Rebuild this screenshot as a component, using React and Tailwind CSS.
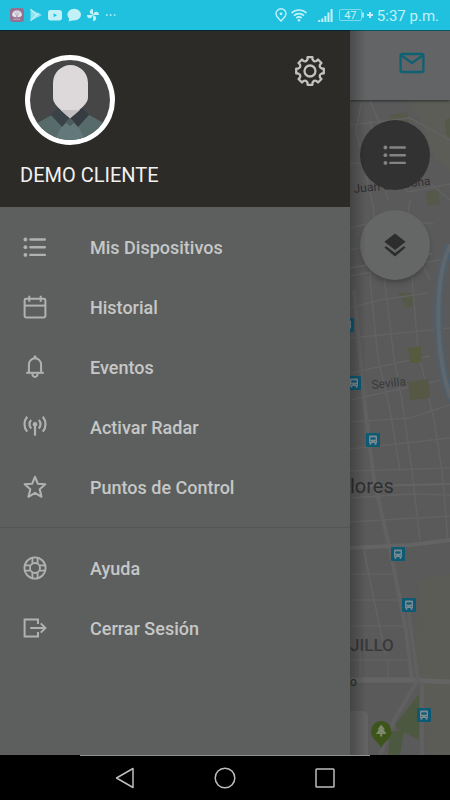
import React from "react";

const GEAR_TEETH = 8;

function polar(radius, degrees) {
  const a = (degrees * Math.PI) / 180;
  return `${(16 + radius * Math.cos(a)).toFixed(2)} ${(16 + radius * Math.sin(a)).toFixed(2)}`;
}

// outline of a cog: a flat tooth and then a rounded valley, eight times
function gearPath() {
  let d = "";
  for (let i = 0; i < GEAR_TEETH; i++) {
    const c = -90 + i * 45;
    d += `${i === 0 ? "M" : "L"}${polar(12, c - 12)} L${polar(14, c - 10)} L${polar(14, c + 10)} L${polar(12, c + 12)} `;
    d += `Q${polar(9.6, c + 22.5)} ${polar(12, c + 33)} `;
  }
  return d + "Z";
}

function GearIcon() {
  return (
    <svg viewBox="0 0 32 32" className="size-8" fill="none" stroke="currentColor" strokeWidth="2.300" strokeLinejoin="round">
      <path d={gearPath()} />
      <circle cx="16" cy="16" r="5.500" />
    </svg>
  );
}

function ListIcon() {
  return (
    <svg viewBox="0 0 24 24" className="size-6" fill="none" stroke="currentColor" strokeWidth="2.400" strokeLinecap="round">
      <path d="M7.400 4.500H21.800M7.400 12.200H21.800M7.400 19.900H21.800" />
      <g fill="currentColor" stroke="none">
        <circle cx="2.400" cy="4.500" r="1.900" />
        <circle cx="2.400" cy="12.200" r="1.900" />
        <circle cx="2.400" cy="19.900" r="1.900" />
      </g>
    </svg>
  );
}

function CalendarIcon() {
  return (
    <svg viewBox="0 0 24 24" className="size-6" fill="none" stroke="currentColor" strokeWidth="2">
      <rect x="1.600" y="3.800" width="20.800" height="18.600" rx="1.400" />
      <path d="M1.600 10.600H22.400" />
      <path d="M6.300 0.800V6.800M17.700 0.800V6.800" />
    </svg>
  );
}

function BellIcon() {
  return (
    <svg viewBox="0 0 24 24" className="size-6" fill="none" stroke="currentColor" strokeWidth="2">
      <path d="M3.200 17.800H20.800" />
      <path d="M5.900 17.500V9.600A6.100 6.400 0 0 1 18.100 9.600V17.500" />
      <path d="M12 0.600V3.400" strokeWidth="2.600" />
      <path d="M9.300 18.400A2.700 3.600 0 0 0 14.700 18.400" />
    </svg>
  );
}

function RadarIcon() {
  return (
    <svg viewBox="0 0 24 24" className="size-6" fill="none" stroke="currentColor" strokeWidth="2.200">
      <circle cx="12" cy="9.200" r="2.300" fill="currentColor" stroke="none" />
      <path d="M12 10V20.600" />
      <path d="M8.200 5A6 6 0 0 0 8.200 13.400M15.800 5A6 6 0 0 1 15.800 13.400" />
      <path d="M4.200 1.800A11.400 11.400 0 0 0 4.200 16.600M19.800 1.800A11.400 11.400 0 0 1 19.800 16.600" />
    </svg>
  );
}

function StarIcon() {
  return (
    <svg viewBox="0 0 24 24" className="size-6" fill="none" stroke="currentColor" strokeWidth="2.100" strokeLinejoin="round">
      <path d="M12 1.800L14.900 8.800L22.300 9.300L16.700 14.200L18.500 21.800L12 17.900L5.500 21.800L7.300 14.200L1.700 9.300L9.100 8.800Z" />
    </svg>
  );
}

function HelpIcon() {
  return (
    <svg viewBox="0 0 24 24" className="size-6" fill="none" stroke="currentColor" strokeWidth="1.800">
      <circle cx="12" cy="12" r="10.600" />
      <circle cx="12" cy="12" r="5" />
      <path d="M9.400 1.800V7.400M14.600 1.800V7.400M9.400 16.600V22.200M14.600 16.600V22.200" />
      <path d="M1.800 9.400H7.400M1.800 14.600H7.400M16.600 9.400H22.200M16.600 14.600H22.200" />
    </svg>
  );
}

function LogoutIcon() {
  return (
    <svg viewBox="0 0 24 24" className="size-6" fill="none" stroke="currentColor" strokeWidth="2">
      <path d="M15 8V3.600H1.600V20.400H15V16" />
      <path d="M7.200 12H22.200" />
      <path d="M17.800 7.400L22.400 12L17.800 16.600" />
    </svg>
  );
}

function MailIcon() {
  return (
    <svg viewBox="0 0 26 22" className="h-[22px] w-[26px]" fill="none" stroke="currentColor" strokeWidth="2.300">
      <rect x="1.600" y="2" width="22.800" height="18" rx="1.500" />
      <path d="M2.200 3.400L13 11L23.800 3.400" />
    </svg>
  );
}

function LayersIcon() {
  return (
    <svg viewBox="0 0 24 24" className="size-6" fill="currentColor">
      <path d="M12 0.600L22.600 8.800L12 17L1.400 8.800Z" />
      <path d="M1.400 13.600L3.200 12.200L12 19L20.800 12.200L22.600 13.600L12 22.600Z" transform="translate(0 1)" />
    </svg>
  );
}

function Avatar() {
  return (
    <svg viewBox="0 0 90 90" className="size-[90px]" role="img" aria-label="Demo cliente">
      <defs>
        <clipPath id="face">
          <circle cx="45" cy="45" r="40" />
        </clipPath>
      </defs>
      <circle cx="45" cy="45" r="45" fill="#ffffff" />
      <g clipPath="url(#face)">
        <rect width="90" height="90" fill="#464646" />
        <path d="M5 72L27 60L45 64L64 60L86 72V90H5Z" fill="#586b6b" />
        <path d="M37 71L45 63L53 71L63 90H27Z" fill="#62787a" />
        <path d="M26 60L33 53L45 63L37 72Z" fill="#394347" />
        <path d="M64 60L57 53L45 63L53 72Z" fill="#353d42" />
        <path d="M45 63L49.500 67.500L45 71L40.500 67.500Z" fill="#4d5c5f" />
        <path d="M28 28A17.500 18 0 0 1 63 28V42C63 48 59 51 45 63C31 51 28 48 28 42Z" fill="#ddd8da" />
        <path d="M35.500 55H55L45 63.500Z" fill="#c3bfc3" />
      </g>
    </svg>
  );
}

function StatusBar() {
  return (
    <header className="flex h-[30px] items-center justify-between bg-[#1fc1de] pr-[11px] pl-[10px] text-[#c3f1f8]">
      <div className="flex items-center gap-[5px]">
        <svg viewBox="0 0 14 14" className="size-[14px]">
          <rect width="14" height="14" rx="3" fill="#98708f" />
          <path d="M2.200 7.500C2 4.500 4 2.600 7 2.600S12 4.500 11.800 7.500C10.500 9 9 9.200 7 9.200S3.500 9 2.200 7.500Z" fill="#dfe5ec" />
          <path d="M7 9L4.600 4M7 9L9.400 4M7 9V3" stroke="#98708f" strokeWidth="0.400" />
          <path d="M3.500 11.300H10.500" stroke="#c9a9c2" strokeWidth="1.200" strokeDasharray="1.300 0.500" />
        </svg>
        <svg viewBox="0 0 14 14" className="size-[14px]">
          <path d="M1.500 1L13 7L1.500 13Z" fill="#8ce2ef" />
          <path d="M1.500 1L7.500 7L1.500 13M7.500 7L10 5.400" fill="none" stroke="#e0fafd" strokeWidth="1" />
        </svg>
        <svg viewBox="0 0 14 14" className="size-[14px]">
          <rect y="2" width="14" height="10.400" rx="2.600" fill="#c3f1f8" />
          <path d="M5.600 5.200L9 7.200L5.600 9.200Z" fill="#1fc1de" />
        </svg>
        <svg viewBox="0 0 14 14" className="size-[14px]" fill="#c3f1f8">
          <ellipse cx="7.200" cy="6.600" rx="6.800" ry="5.800" />
          <path d="M2.500 9L1.600 13.600L7 12Z" />
        </svg>
        <svg viewBox="0 0 14 14" className="size-[14px]" fill="#c3f1f8">
          <path d="M7 7V1A3.500 3 0 0 0 3.800 4.200C3.800 5.500 5 6 7 7Z" />
          <path d="M7 7V1A3.500 3 0 0 0 3.800 4.200C3.800 5.500 5 6 7 7Z" transform="rotate(90 7 7)" />
          <path d="M7 7V1A3.500 3 0 0 0 3.800 4.200C3.800 5.500 5 6 7 7Z" transform="rotate(180 7 7)" />
          <path d="M7 7V1A3.500 3 0 0 0 3.800 4.200C3.800 5.500 5 6 7 7Z" transform="rotate(270 7 7)" />
        </svg>
        <svg viewBox="0 0 14 14" className="size-[14px]" fill="#a6e9f3">
          <circle cx="1.800" cy="7" r="1" />
          <circle cx="5.700" cy="7" r="1" />
          <circle cx="9.600" cy="7" r="1" />
        </svg>
      </div>

      <div className="flex items-center">
        <svg viewBox="0 0 12 14" className="mr-1 h-[14px] w-[12px]" fill="none" stroke="currentColor" strokeWidth="1.400">
          <path d="M6 13C3.500 10.500 1 8.200 1 5.700A5 4.900 0 0 1 11 5.700C11 8.200 8.500 10.500 6 13Z" />
          <circle cx="6" cy="5.800" r="1.400" fill="currentColor" stroke="none" />
        </svg>
        <svg viewBox="0 0 16 14" className="mr-[11px] h-[14px] w-[16px]" fill="none" stroke="currentColor" strokeWidth="1.700">
          <path d="M0.600 5A10.600 10.600 0 0 1 15.400 5" />
          <path d="M3 7.600A7.200 7.200 0 0 1 13 7.600" />
          <path d="M5.300 10A4 4 0 0 1 10.700 10" />
          <circle cx="8" cy="12.200" r="1.300" fill="currentColor" stroke="none" />
        </svg>
        <svg viewBox="0 0 15 14" className="mr-[6px] h-[14px] w-[15px]" stroke="currentColor" strokeWidth="2">
          <path d="M1.200 14V12M4.300 14V10.500M7.400 14V8M10.500 14V4.500M13.600 14V1" />
        </svg>
        <span className="flex h-3 w-[23px] items-center justify-center rounded-xs border border-[#7bdae8] text-[11px] leading-none">
          47
        </span>
        <svg viewBox="0 0 12 10" className="mr-[3px] h-[10px] w-[12px]" stroke="currentColor">
          <path d="M1 2.500V7.500" strokeWidth="1.500" />
          <path d="M8 2V8M5 5H11" strokeWidth="2" />
        </svg>
        <time className="pt-px text-[15px] leading-5">5:37 p.m.</time>
      </div>
    </header>
  );
}

const mainItems = [
  { label: "Mis Dispositivos", Icon: ListIcon },
  { label: "Historial", Icon: CalendarIcon },
  { label: "Eventos", Icon: BellIcon },
  { label: "Activar Radar", Icon: RadarIcon },
  { label: "Puntos de Control", Icon: StarIcon },
];

const extraItems = [
  { label: "Ayuda", Icon: HelpIcon },
  { label: "Cerrar Sesión", Icon: LogoutIcon },
];

function MenuList({ items }) {
  return (
    <ul>
      {items.map(({ label, Icon }) => (
        <li key={label}>
          <a href="#" className="flex h-[60px] items-center gap-[43px] pl-[23px] text-lg font-medium text-[#c6c7c7]">
            <span className="text-[#b0b2b1]">
              <Icon />
            </span>
            <span className="pt-px">{label}</span>
          </a>
        </li>
      ))}
    </ul>
  );
}

function Drawer() {
  return (
    <aside className="flex w-[350px] shrink-0 flex-col bg-[#5d5f5e]">
      <div className="h-[177px] border-t border-[#04262d] bg-[#2c2b28] px-5 pt-6">
        <div className="flex items-start justify-between pl-[5px]">
          <Avatar />
          <button type="button" aria-label="Ajustes" className="mr-1 text-[#c4c2c1]">
            <GearIcon />
          </button>
        </div>
        <h1 className="mt-4 text-xl leading-7 text-[#f1f1f0]">DEMO CLIENTE</h1>
      </div>
      <nav>
        <div className="py-[10px]">
          <MenuList items={mainItems} />
        </div>
        <div className="border-t border-[#535554] py-[10px]">
          <MenuList items={extraItems} />
        </div>
      </nav>
    </aside>
  );
}

// top-left corners of the transit stops
const busStops = [
  [-10, 218],
  [-3, 276],
  [16, 333],
  [41, 447],
  [52, 498],
  [67, 608],
];

function BusStop({ x, y }) {
  return (
    <g transform={`translate(${x} ${y})`}>
      <rect width="14" height="14" rx="1" fill="#0d5a75" />
      <path d="M3 3.500Q3 2.500 4 2.500H10Q11 2.500 11 3.500V10H10.400V11.800H8.600V10H5.400V11.800H3.600V10H3Z" fill="#7c8a92" />
      <rect x="4.400" y="4.400" width="5.200" height="2.200" fill="#0d5a75" />
      <circle cx="4.800" cy="8.500" r="0.600" fill="#0d5a75" />
      <circle cx="9.200" cy="8.500" r="0.600" fill="#0d5a75" />
    </g>
  );
}

function CityMap() {
  return (
    <svg viewBox="0 0 100 655" preserveAspectRatio="xMinYMin slice" className="absolute inset-0 size-full font-[Roboto,sans-serif]">
      <rect width="100" height="655" fill="#5a5a5a" />
      <path d="M58 0H100V70L84 58L70 20Z" fill="#5c5d57" />
      <path d="M68 480L100 474V655H78L66 560Z" fill="#5b5c55" />
      <g fill="#54594a">
        <path d="M40 15L57 12L59 24L40 26Z" />
        <path d="M76 92L88 90L90 104L78 106Z" />
        <path d="M48 193H63V206L56 208Z" />
        <path d="M95 20L100 18V38L96 34Z" />
      </g>
      <g fill="none" stroke="#626262" strokeWidth="1.500">
        <path d="M0 64L30 60L58 92L100 84" />
        <path d="M0 128L40 118L84 124M0 150L50 140M0 176L100 158" />
        <path d="M0 208L30 200L78 193M0 238L100 228M0 273L80 256M0 300L100 278" />
        <path d="M0 322L60 318L100 305M0 349L100 338M0 371L100 368" />
        <path d="M0 398L60 394L100 395M0 422L100 416M0 474H46M0 500H56M0 526H56" />
        <path d="M12 0L6 30L24 110L20 180L28 258L40 310L50 371" />
        <path d="M34 176L44 258L52 300L62 371L70 440" />
        <path d="M62 176L68 250L84 320L92 371L98 440" />
        <path d="M20 20L38 100M60 100L56 130L80 180M76 80L100 100" />
        <path d="M14 450L24 500L36 555M0 560H60M10 550V580M38 560V580" />
        <path d="M0 25L60 18L100 40M20 0L44 60" />
      </g>
      <g fill="none" stroke="#646464">
        <path d="M0 168L82 154M0 389L14 386L100 384" strokeWidth="2" />
        <path d="M4 190L14 300L24 380L40 450L56 530L62 580" strokeWidth="4" stroke="#616161" />
        <path d="M0 448L60 445L100 440" strokeWidth="4" />
        <path d="M0 580H60L100 582" strokeWidth="5" />
        <path d="M58 510L68 580L44 620L30 655M72 582V655" strokeWidth="4" stroke="#606060" />
      </g>
      <path d="M58 248L71 246L72 262L60 263Z" fill="#585a40" />
      <path d="M58 282L78 279L80 298L60 300Z" fill="#565845" />
      <path d="M46 624L69 594V640L46 628ZM40 632L54 630L50 655H38Z" fill="#4d5841" />
      <path d="M101 145C84 170 84 260 102 300" fill="none" stroke="#4f5f6b" strokeWidth="9" />
      <path d="M101 145C84 170 84 260 102 300" fill="none" stroke="#60666a" strokeWidth="4" />
      <path d="M0 611H12Q18 611 18 617V655H0Z" fill="#626362" />
      {busStops.map(([x, y]) => (
        <BusStop key={y} x={x} y={y} />
      ))}
      <g transform="translate(21 621)">
        <path d="M10 27C9 22 0 18 0 10.500A10.200 10.500 0 0 1 20.500 10.500C20.500 18 12 22 10 27Z" fill="#3d541b" />
        <path d="M10.200 3.500L14 8.500H12.500L15.500 13H11.200V15.500H9.200V13H5L8 8.500H6.500Z" fill="#7c8a6b" />
      </g>
      <g fill="#2e2f31">
        <text x="4" y="93" fontSize="12" transform="rotate(-6 4 93)">Juan de Arona</text>
        <text x="22" y="289" fontSize="12" fill="#393a3b" transform="rotate(-6 22 289)">Sevilla</text>
        <text x="0" y="393" fontSize="20">lores</text>
        <text x="0" y="551" fontSize="17" fontWeight="500" fill="#38393b">JILLO</text>
        <text x="0" y="586" fontSize="12">o</text>
      </g>
    </svg>
  );
}

function MapScreen() {
  return (
    <main className="relative flex flex-1 flex-col overflow-hidden">
      <div className="z-10 flex h-[70px] items-center justify-end border-t border-[#0b5560] bg-[#636465] pr-[25px] pb-[6px] text-[#0e6274] shadow-sm shadow-black/40">
        <button type="button" aria-label="Mensajes">
          <MailIcon />
        </button>
      </div>
      <div className="relative flex-1">
        <CityMap />
        <div className="relative flex flex-col gap-[20px] px-[10px] py-5">
          <button
            type="button"
            aria-label="Lista"
            className="flex size-[70px] items-center justify-center rounded-full bg-[#323232] text-[#848484]"
          >
            <ListIcon />
          </button>
          <button
            type="button"
            aria-label="Capas"
            className="flex size-[70px] items-center justify-center rounded-full bg-[#656666] text-[#2d2d2d] shadow-md shadow-black/20"
          >
            <LayersIcon />
          </button>
        </div>
      </div>
      {/* shadow cast by the drawer */}
      <div className="pointer-events-none absolute inset-y-0 left-0 z-20 w-4 bg-linear-to-r from-black/25 to-transparent" />
    </main>
  );
}

function NavBar() {
  return (
    <footer className="bg-black text-[#bdbdbd]">
      <div className="mx-20 h-px bg-[#8f9190]" />
      <div className="flex h-11 items-center justify-center gap-[76px]">
        <button type="button" aria-label="Atrás">
          <svg viewBox="0 0 24 24" className="size-6" fill="none" stroke="currentColor" strokeWidth="1.500" strokeLinejoin="round">
            <path d="M20 2.500V21.500L3.500 12Z" />
          </svg>
        </button>
        <button type="button" aria-label="Inicio">
          <svg viewBox="0 0 24 24" className="size-6" fill="none" stroke="currentColor" strokeWidth="1.500">
            <circle cx="12" cy="12" r="9.800" />
          </svg>
        </button>
        <button type="button" aria-label="Recientes">
          <svg viewBox="0 0 24 24" className="size-6" fill="none" stroke="currentColor" strokeWidth="1.500">
            <rect x="3" y="3" width="18" height="18" rx="0.800" />
          </svg>
        </button>
      </div>
    </footer>
  );
}

export default function App() {
  return (
    <div className="flex min-h-screen flex-col bg-black font-[Roboto,sans-serif]">
      <StatusBar />
      <div className="flex flex-1">
        <Drawer />
        <MapScreen />
      </div>
      <NavBar />
    </div>
  );
}
